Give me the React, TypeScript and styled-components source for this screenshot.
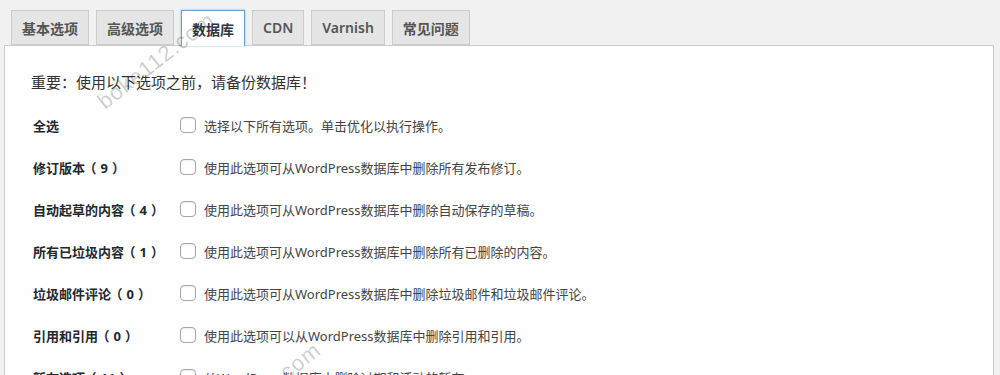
import React from "react";
import styled, { createGlobalStyle } from "styled-components";

const Global = createGlobalStyle`
  html, body { margin: 0; padding: 0; background: #f1f1f1; }
  body {
    width: 1000px; height: 375px; overflow: hidden;
    font-family: "Noto Sans", "Noto Sans CJK SC", sans-serif;
  }
`;

const Page = styled.div`
  position: relative;
  padding-top: 10px;
  height: 365px;
  overflow: hidden;
`;

const TabBar = styled.nav`
  display: flex;
  gap: 7px;
  padding-left: 11px;
  position: relative;
  z-index: 2;
`;

const Tab = styled.div<{ $active?: boolean }>`
  box-sizing: border-box;
  height: ${(p) => (p.$active ? "36px" : "35px")};
  margin-bottom: ${(p) => (p.$active ? "-1px" : "0")};
  padding: 0 10px;
  display: flex;
  align-items: center;
  font-size: 14px;
  font-weight: 600;
  color: ${(p) => (p.$active ? "#32373c" : "#555")};
  background: ${(p) => (p.$active ? "#fff" : "#e5e5e5")};
  border: 1px solid ${(p) => (p.$active ? "#6a9fd4" : "#ccc")};
  border-bottom: ${(p) => (p.$active ? "none" : "1px solid #ccc")};
  box-shadow: ${(p) => (p.$active ? "0 0 2px rgba(30,140,190,.5)" : "none")};
  white-space: nowrap;
`;

const Panel = styled.section`
  margin-left: 4px;
  width: 990px;
  box-sizing: border-box;
  background: #fefefe;
  border: 1px solid #ccc;
  border-bottom: none;
  padding: 25px 0 0 26px;
  height: 330px;
`;

const Notice = styled.p`
  margin: 0 0 11px;
  font-size: 15px;
  line-height: 22px;
  color: #333;
`;

const Row = styled.div`
  display: grid;
  grid-template-columns: 147px auto;
  align-items: center;
  height: 42px;
  padding-left: 2px;
`;

const Label = styled.div`
  font-size: 13px;
  font-weight: 700;
  color: #23282d;
  white-space: nowrap;
  display: flex;
  align-items: baseline;
`;

const Count = styled.span`
  margin-left: 5px;
  font-feature-settings: "halt";
`;

const Num = styled.span`
  margin: 0 4px;
`;

const Option = styled.label`
  display: flex;
  align-items: center;
  gap: 8px;
  font-size: 13px;
  color: #444;
  white-space: nowrap;
`;

const Box = styled.span`
  width: 16px;
  height: 16px;
  box-sizing: border-box;
  border: 1px solid #a2a7ac;
  border-radius: 4px;
  background: #fff;
  box-shadow: inset 0 1px 2px rgba(0, 0, 0, 0.08);
  flex: none;
`;

const Watermark = styled.span<{ $x: number; $y: number }>`
  position: absolute;
  left: ${(p) => p.$x}px;
  top: ${(p) => p.$y}px;
  transform: rotate(-38deg);
  transform-origin: left bottom;
  font-family: "Liberation Sans", Arial, sans-serif;
  font-size: 22px;
  line-height: 24px;
  letter-spacing: 1px;
  color: rgba(0, 0, 0, 0.2);
  pointer-events: none;
  z-index: 3;
  white-space: nowrap;
`;

const tabs = ["基本选项", "高级选项", "数据库", "CDN", "Varnish", "常见问题"];

const rows: [string, string | null, string][] = [
  ["全选", null, "选择以下所有选项。单击优化以执行操作。"],
  ["修订版本", "9", "使用此选项可从WordPress数据库中删除所有发布修订。"],
  ["自动起草的内容", "4", "使用此选项可从WordPress数据库中删除自动保存的草稿。"],
  ["所有已垃圾内容", "1", "使用此选项可从WordPress数据库中删除所有已删除的内容。"],
  ["垃圾邮件评论", "0", "使用此选项可从WordPress数据库中删除垃圾邮件和垃圾邮件评论。"],
  ["引用和引用", "0", "使用此选项可以从WordPress数据库中删除引用和引用。"],
  ["暂存选项", "11", "从WordPress数据库中删除过期和活动的暂存。"],
];

export default function App() {
  return (
    <>
      <Global />
      <Page>
        <TabBar>
          {tabs.map((t) => (
            <Tab key={t} $active={t === "数据库"}>
              {t}
            </Tab>
          ))}
        </TabBar>
        <Panel>
          <Notice>重要：使用以下选项之前，请备份数据库！</Notice>
          {rows.map(([l, n, d]) => (
            <Row key={l}>
              <Label>
                {l}
                {n !== null && (
                  <Count>
                    （<Num>{n}</Num>）
                  </Count>
                )}
              </Label>
              <Option>
                <Box />
                {d}
              </Option>
            </Row>
          ))}
        </Panel>
        <Watermark $x={108} $y={90}>boke112.com</Watermark>
        <Watermark $x={214} $y={420}>boke112.com</Watermark>
      </Page>
    </>
  );
}
